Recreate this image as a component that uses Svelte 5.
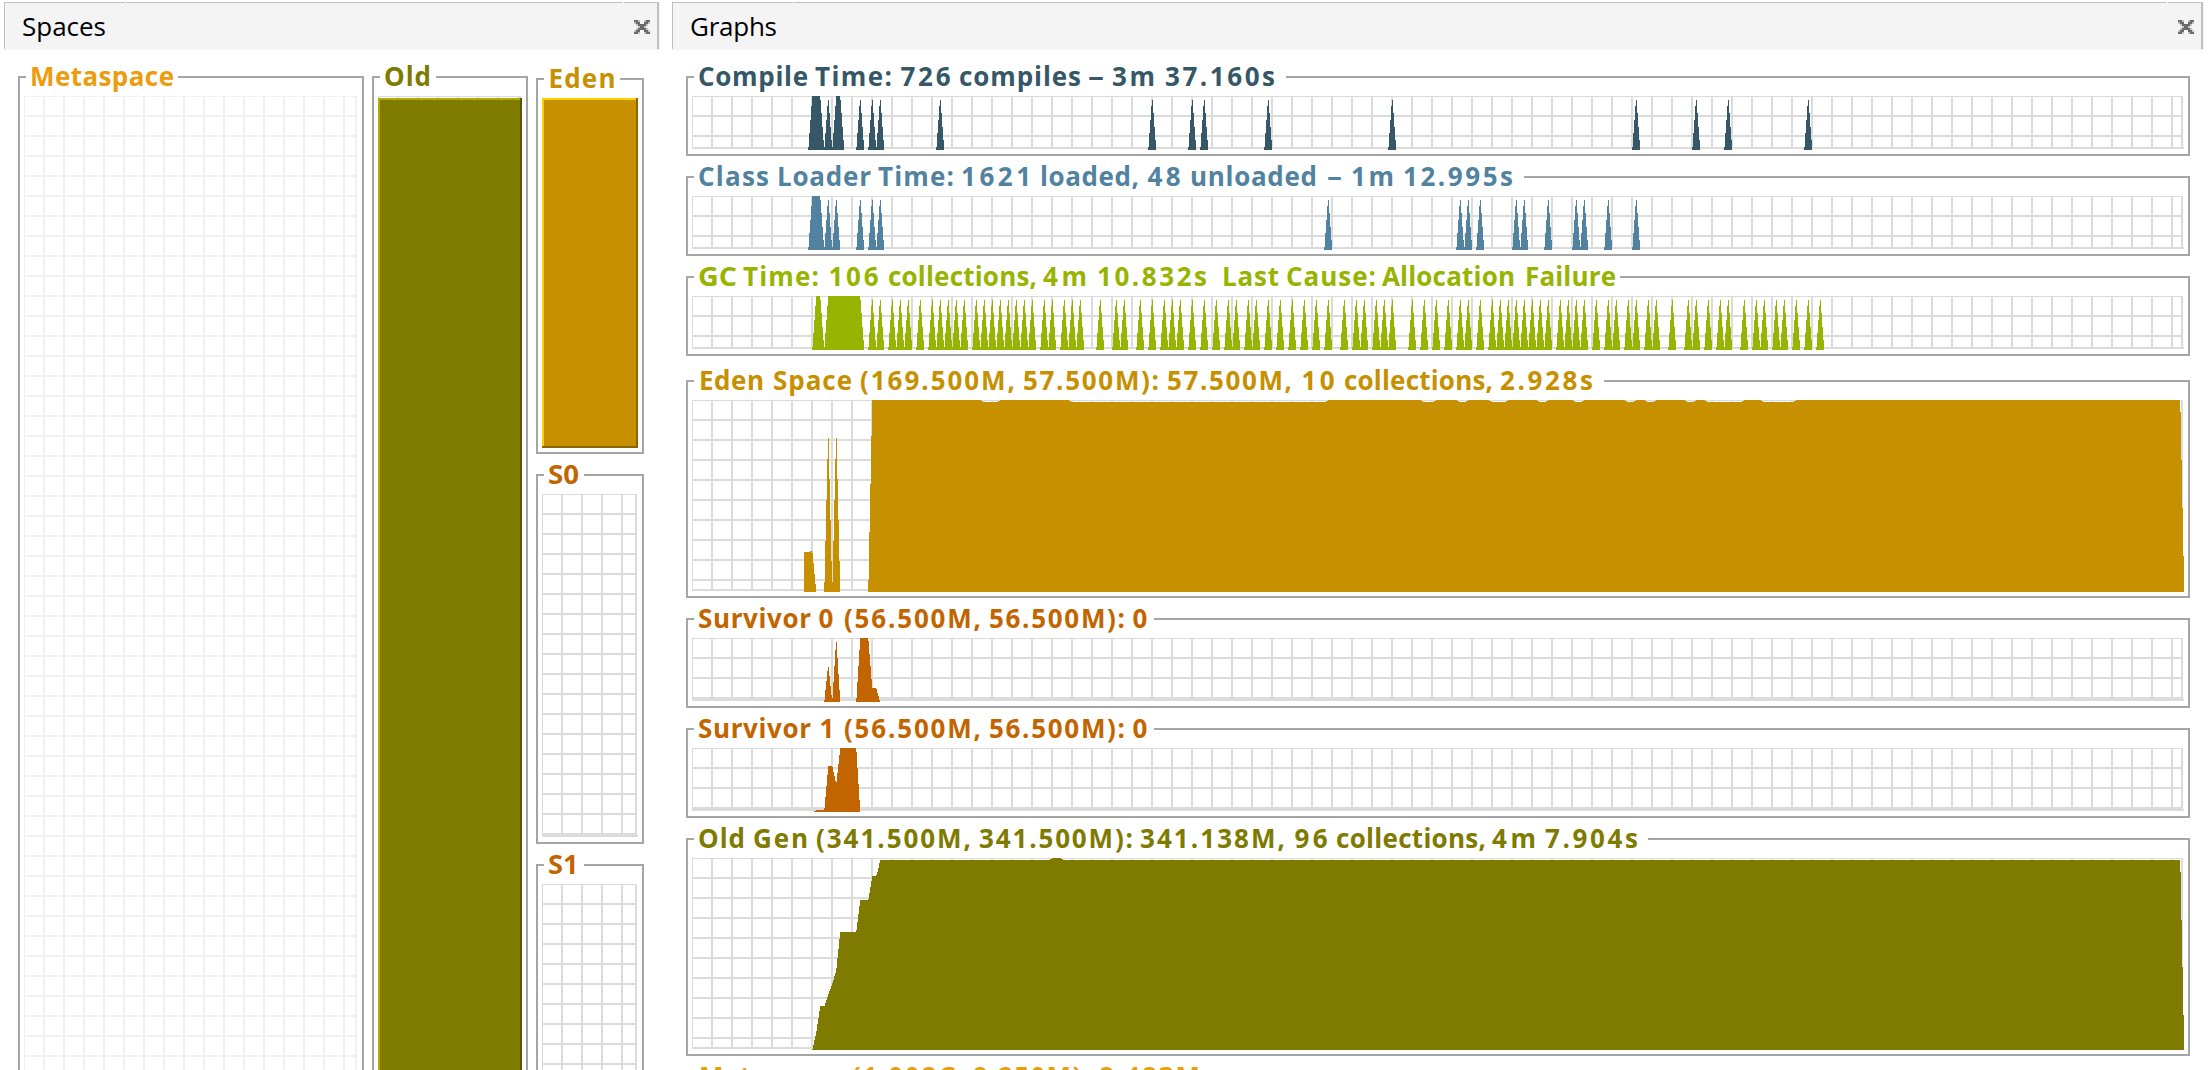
<script>
  // A run of words, each with its start and end on the title line.
  const spaces = {
    meta: { x: 18, gapEnd: 178, color: '#ec9c0c', words: [['Metaspace', 31, 173]] },
    old: { x: 372, gapEnd: 436, color: '#7f7a00', words: [['Old', 385, 430]] },
    eden: { x: 536, gapEnd: 620, color: '#c69000', words: [['Eden', 549.5, 614.5]] },
    s0: { x: 536, gapEnd: 584, color: '#c26500', words: [['S0', 549, 578]] },
    s1: { x: 536, gapEnd: 584, color: '#c26500', words: [['S1', 549, 577.5]] }
  };

  // Pulses: sample index of the peak, or [first, last] of a saturated stretch.
  const compile = [[30, 32], 34, [36, 37], 42, 45, 47, 62, 115, 125, 128, 144, 175, 236, 251, 259, 279];
  const loader = [[30, 32], 34, 36, 42, 45, 47, 159, 192, 194, 197, 206, 208, 214, 221, 223, 229, 236];
  const gc = [
    [31, 32], [34, 42], 45, 47, 50, 52, 54, 57, 60, 62, 64, 66, 68, 71, 73, 75, 77, 79, 81, 83, 85, 88, 90,
    93, 95, 97, 102, 106, 108, 112, 115, 118, 120, 122, 125, 128, 131, 134, 136, 139, 141, 144, 147, 150,
    153, 156, 159, 163, 166, 168, 171, 173, 175, 180, 183, 186, 189, 192, 194, 197, 200, 202, 204, 206,
    208, 210, 212, 214, 217, 219, 221, 223, 226, 229, 231, 234, 236, 239, 241, 245, 249, 251, 254, 257,
    259, 263, 266, 268, 271, 273, 276, 279, 282
  ];

  const RISE = [51, 37, 24, 10];
  const FALL = [4, 17, 31, 44];

  function pulsePath(list, h) {
    let d = '';
    const col = (x, w, top) => (d += `M${x} ${top}h${w}V${h}h${-w}z`);
    for (const p of list) {
      const [a, b] = Array.isArray(p) ? p : [p, p];
      RISE.forEach((t, i) => col(a * 4 - 4 + i, 1, t));
      if (b > a) col(a * 4, (b - a) * 4, 0);
      FALL.forEach((t, i) => col(b * 4 + i, 1, t));
    }
    return d;
  }

  // Steps: [x, top] pairs, each level holding until the next x.
  function stepPath(steps, h) {
    let d = '';
    for (let i = 0; i < steps.length - 1; i++) {
      const [x, top] = steps[i];
      const w = steps[i + 1][0] - x;
      if (top < h && w > 0) d += `M${x} ${top}h${w}V${h}h${-w}z`;
    }
    return d;
  }

  const seq = (x, tops) => tops.map((t, i) => [x + i, t]);
  const dips = [
    [289, 308], [377, 636], [729, 744], [765, 776], [797, 816], [845, 856], [881, 892],
    [933, 944], [953, 964], [993, 1004], [1013, 1052], [1069, 1104]
  ];
  const spike = [182, 141, 100, 59, 38, 79, 120, 161];

  const eden = [
    [112, 152], [118, 151], ...seq(120, [153, 163, 174, 184]), [124, 192],
    ...seq(132, spike), ...seq(140, spike), [148, 192],
    ...seq(176, [180, 132, 84, 36, 0]),
    ...dips.flatMap(([a, b]) => [[a, 1], [a + 2, 2], [b - 2, 1], [b, 0]]),
    ...seq(1488, [12, 60, 108, 156]), [1492, 192]
  ];
  const surv0 = [
    ...seq(132, [62, 52, 43, 33, 29, 38, 48, 57, 60, 44, 28, 12, 4, 20, 36, 52]), [148, 64],
    ...seq(164, [60, 44, 28, 12, 0]), ...seq(176, [3, 16, 28, 41, 50]),
    ...seq(184, [51, 55, 58, 62]), [188, 64]
  ];
  const surv1 = [
    [122, 63], [124, 62], ...seq(132, [60, 49, 38, 27, 18]),
    ...seq(140, [19, 24, 28, 33, 34, 25, 16, 7, 0]), ...seq(164, [4, 20, 36, 52]), [168, 64]
  ];
  const oldGen = [
    ...seq(120, [191, 187, 182, 178, 173, 166, 160, 153, 148]),
    ...seq(133, [145, 142, 139, 136, 133, 131, 128, 125, 122, 118, 115, 110, 100, 91, 81, 74]),
    ...seq(164, [72, 64, 56, 48, 42]), ...seq(176, [41, 35, 29, 23, 18]), ...seq(184, [17, 14, 10, 5, 2]),
    [358, 1], [360, 0], [369, 1], [371, 2], ...seq(1488, [14, 62, 109, 157]), [1492, 192]
  ];

  const graphs = [
    { h: 54, color: '#355768', gapEnd: 1286, d: pulsePath(compile, 54),
      words: [['Compile', 699, 807], ['Time:', 816, 891], ['726', 900, 951], ['compiles', 960, 1080], ['–', 1089, 1103], ['3m', 1113, 1154], ['37.160s', 1166, 1274]] },
    { h: 54, color: '#5182a0', gapEnd: 1524, d: pulsePath(loader, 54),
      words: [['Class', 699, 768], ['Loader', 778, 870], ['Time:', 879, 953], ['1621', 962, 1030], ['loaded,', 1041, 1138], ['48', 1147, 1181], ['unloaded', 1191, 1316], ['–', 1328, 1341], ['1m', 1352, 1393], ['12.995s', 1404, 1512]] },
    { h: 54, color: '#96b400', gapEnd: 1620, d: pulsePath(gc, 54),
      words: [['GC', 699, 736], ['Time:', 744, 818], ['106', 828, 879], ['collections,', 889, 1036], ['4m', 1044, 1086], ['10.832s', 1098, 1206], ['Last', 1223, 1278], ['Cause:', 1287, 1375], ['Allocation', 1383, 1514], ['Failure', 1526, 1615]] },
    { h: 192, color: '#c69000', gapEnd: 1604, spaced: true, d: stepPath(eden, 192),
      words: [['Eden', 700, 763], ['Space', 774, 851], ['(169.500M,', 861, 1014], ['57.500M):', 1024, 1158], ['57.500M,', 1168, 1291], ['10', 1301, 1335], ['collections,', 1345, 1492], ['2.928s', 1501, 1592]] },
    { h: 64, color: '#c26500', gapEnd: 1154, d: stepPath(surv0, 64),
      words: [['Survivor', 699, 810], ['0', 818, 834], ['(56.500M,', 845, 980], ['56.500M):', 990, 1124], ['0', 1132, 1149]] },
    { h: 64, color: '#c26500', gapEnd: 1154, d: stepPath(surv1, 64),
      words: [['Survivor', 699, 810], ['1', 819, 835], ['(56.500M,', 845, 980], ['56.500M):', 990, 1124], ['0', 1132, 1149]] },
    { h: 192, color: '#7f7a00', gapEnd: 1648, d: stepPath(oldGen, 192),
      words: [['Old', 699, 744], ['Gen', 754, 807], ['(341.500M,', 817, 970], ['341.500M):', 980, 1132], ['341.138M,', 1141, 1284], ['96', 1294, 1328], ['collections,', 1337, 1485], ['4m', 1493, 1535], ['7.904s', 1546, 1637]] },
    { h: 64, color: '#ec9c0c', gapEnd: 1204, d: '',
      words: [['Metaspace', 700, 842], ['(1.008G,', 853, 965], ['9.250M):', 974, 1089], ['8.483M', 1100, 1199]] }
  ].map((g) => ({ ...g, x: 686 }));

  // Short numbers keep their tracking inside the word rather than at its edges.
  const inset = (word) => (/^\d{1,3}$/.test(word) ? 1.5 : 0);
  const adjust = (word) => (/^(\d[\d.s]*|\d?m)$/.test(word) || word.length > 2 ? 'spacing' : 'spacingAndGlyphs');

  function gridPath(w, h) {
    let d = `M0 0h${w - 1}v1h${1 - w}zM0 0h1v${h - 1}h-1z`;
    for (let x = 19; x < w - 3; x += 20) d += `M${x} 0h2v${h - 1}h-2z`;
    for (let y = 19; y < h - 3; y += 20) d += `M0 ${y}h${w - 3}v2h${3 - w}z`;
    return d + `M${w - 3} 0h2v${h - 1}h-2zM0 ${h - 3}h${w}v2h${-w}z`;
  }
</script>

{#snippet title(t)}
  <svg class="title" width={t.gapEnd - t.x - 8} height="31" fill={t.color}>
    <text>
      {#each t.words as [word, a, b]}
        <tspan x={a - t.x - 9 + inset(word)} y="21" textLength={b - a + 2 - 2 * inset(word)} lengthAdjust={adjust(word)}>{word}</tspan>{' '}
      {/each}
    </text>
  </svg>
{/snippet}

{#snippet grid(w, h, color)}
  <path d={gridPath(w, h)} fill={color} />
{/snippet}

{#snippet bar(y, w, h, base, light, dark)}
  <rect {y} width={w} height={h} fill={dark} />
  <rect {y} width={w - 2} height={h - 2} fill={light} />
  <rect x="2" y={y + 2} width={w - 4} height={h - 4} fill={base} />
{/snippet}

{#snippet tab(label, len)}
  <header class="tab">
    <svg class="label" width="120" height="40">
      <text x="0" y="28" textLength={len}>{label}</text>
    </svg>
    <svg class="close" width="16" height="14" viewBox="0 0 8 7">
      <path fill="#c4c4c4" d="M2 0h1v1h-1zM5 0h1v1h-1zM0 1h8v1h-8zM1 2h6v1h-6zM2 3h4v1h-4zM1 4h6v1h-6zM0 5h8v1h-8zM2 6h1v1h-1zM5 6h1v1h-1z" />
      <path fill="#f4f4f4" d="M3 1h2v1h-2zM3 5h2v1h-2z" />
      <path fill="#6b6b6b" d="M0 0h2v1h-2zM6 0h2v1h-2zM1 1h2v1h-2zM5 1h2v1h-2zM2 2h4v1h-4zM3 3h2v1h-2zM2 4h4v1h-4zM1 5h2v1h-2zM5 5h2v1h-2zM0 6h2v1h-2zM6 6h2v1h-2z" />
    </svg>
  </header>
{/snippet}

<main>
  <section class="pane spaces">
    {@render tab('Spaces', 84)}
    <div class="columns">
      <div class="frame">
        {@render title(spaces.meta)}
        <svg class="plot" width="334" height="1004">{@render grid(334, 1004, '#f1f1f1')}</svg>
      </div>
      <div class="frame">
        {@render title(spaces.old)}
        <svg class="plot" width="144" height="1004">
          {@render grid(144, 1004, '#dbdbdb')}
          {@render bar(2, 144, 1002, '#7f7a00', '#b2ac00', '#595500')}
        </svg>
      </div>
      <div class="young">
        <div class="frame">
          {@render title(spaces.eden)}
          <svg class="plot" width="96" height="350">{@render bar(0, 96, 350, '#c69000', '#ffcf00', '#8b6500')}</svg>
        </div>
        {#each [spaces.s0, spaces.s1] as s}
          <div class="frame">
            {@render title(s)}
            <svg class="plot" width="96" height="344">{@render grid(96, 344, '#dbdbdb')}</svg>
          </div>
        {/each}
      </div>
    </div>
  </section>

  <section class="pane graphs">
    {@render tab('Graphs', 87)}
    <div class="stack">
      {#each graphs as g}
        <div class="frame" class:spaced={g.spaced}>
          {@render title(g)}
          <svg class="plot" width="1492" height={g.h}>
            {@render grid(1492, g.h, '#dbdbdb')}
            <path d={g.d} fill={g.color} />
          </svg>
        </div>
      {/each}
    </div>
  </section>
</main>

<style>
  :global(body) {
    margin: 0;
    background: #fff;
    overflow: hidden;
  }
  main {
    box-sizing: border-box;
    display: flex;
    gap: 12px;
    width: 2208px;
    height: 1070px;
    padding: 2px 4px 0;
    overflow: hidden;
    font-family: 'Open Sans', 'Noto Sans', sans-serif;
  }
  .pane {
    display: flex;
    flex-direction: column;
  }
  .spaces {
    width: 656px;
  }
  .graphs {
    width: 1532px;
  }
  .tab {
    box-sizing: border-box;
    display: flex;
    flex: none;
    align-items: flex-start;
    justify-content: space-between;
    height: 48px;
    padding: 6px 10px 0 18px;
    /* left, right and top edges stop short of the tab's bottom row */
    background:
      linear-gradient(#bfbfbf, #bfbfbf) 0 0 / 1px 47px no-repeat,
      linear-gradient(#bfbfbf, #bfbfbf) right 1px top 0 / 2px 47px no-repeat,
      linear-gradient(#fff, #fff) 121px 0 / 1px 1px no-repeat,
      linear-gradient(#fff, #fff) right 36px top 0 / 1px 1px no-repeat,
      linear-gradient(#bfbfbf, #bfbfbf) 0 0 / calc(100% - 1px) 1px no-repeat,
      #f4f4f4;
  }
  .label {
    overflow: visible;
    font-size: 26px;
    fill: #000;
  }
  .close {
    margin-top: 12px;
    shape-rendering: crispEdges;
  }
  .columns {
    display: flex;
    align-items: flex-start;
    gap: 8px;
    padding: 26px 0 0 14px;
  }
  .young {
    display: flex;
    flex-direction: column;
    gap: 20px;
    padding-top: 2px;
  }
  .stack {
    display: flex;
    flex-direction: column;
    align-items: flex-start;
    gap: 20px;
    padding: 26px 0 0 14px;
  }
  .frame {
    position: relative;
    flex: none;
    padding: 18px 4px 4px;
    border: 2px solid #a5a5a5;
  }
  .spaced {
    margin-top: 4px;
  }
  .title {
    position: absolute;
    top: -13px;
    left: 6px;
    overflow: visible;
    background: #fff;
    font-size: 26px;
    font-weight: 700;
  }
  .plot {
    display: block;
    shape-rendering: crispEdges;
  }
</style>
